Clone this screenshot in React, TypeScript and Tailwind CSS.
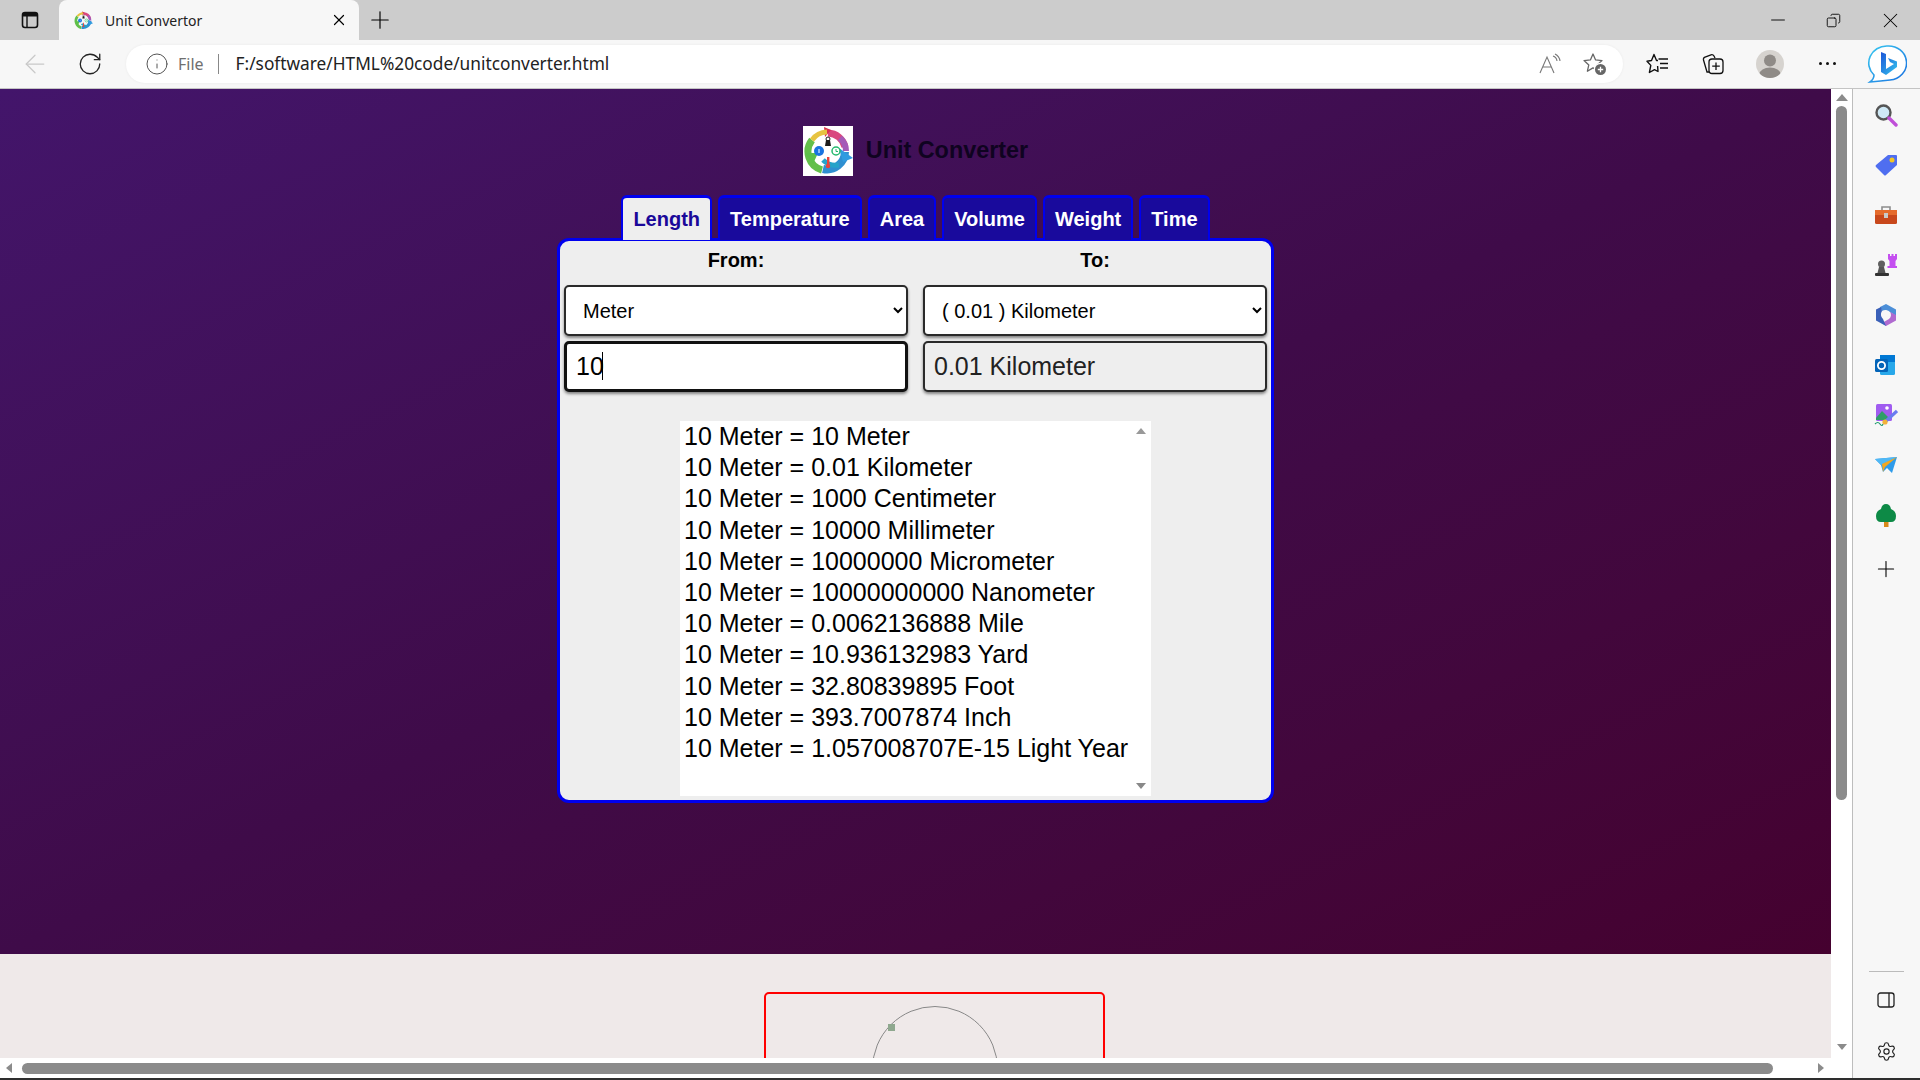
import { ArrowLeft, Copy, Info, Minus, Plus, RotateCw, Settings, X } from 'lucide-react';

const tabs = ['Length', 'Temperature', 'Area', 'Volume', 'Weight', 'Time'];

const results = [
  '10 Meter = 10 Meter',
  '10 Meter = 0.01 Kilometer',
  '10 Meter = 1000 Centimeter',
  '10 Meter = 10000 Millimeter',
  '10 Meter = 10000000 Micrometer',
  '10 Meter = 10000000000 Nanometer',
  '10 Meter = 0.0062136888 Mile',
  '10 Meter = 10.936132983 Yard',
  '10 Meter = 32.80839895 Foot',
  '10 Meter = 393.7007874 Inch',
  '10 Meter = 1.057008707E-15 Light Year',
];

const ConverterLogo = ({ size }: { size: number }) => (
  <svg width={size} height={size} viewBox="0 0 50 50" fill="none">
    <path d="M25 7 A18 18 0 0 1 42 21" stroke="#d9487f" strokeWidth="7" />
    <path d="M37 12 A18 18 0 0 1 43 25" stroke="#a45ab8" strokeWidth="6" />
    <path d="M21 1 L28 4 L22 11 Z" fill="#d9304f" />
    <path d="M42 26 A18 18 0 0 1 20 43" stroke="#2f8fd0" strokeWidth="8" />
    <path d="M36 22 L50 32 L40 36 Z" fill="#2f9be0" />
    <path d="M19 44 A19 19 0 0 1 9 14" stroke="#63bf4a" strokeWidth="7" />
    <path d="M9 14 A19 19 0 0 1 24 6" stroke="#e7c341" strokeWidth="5" />
    <path d="M2 27 L15 27 L10 38 Z" fill="#5cc04a" />
    <path d="M20 34 A18 18 0 0 0 36 39" stroke="#25a3c9" strokeWidth="5" />
    <circle cx="16" cy="25" r="5" fill="#1873e0" />
    <rect x="15.5" y="23" width="1" height="4" fill="#fff" />
    <circle cx="33" cy="25" r="4" fill="#fff" stroke="#25b96e" strokeWidth="1.5" />
    <path d="M33 23 V25.5 H35" stroke="#25b96e" />
    <path d="M22 20 L23 14 H27 L28 20 Z" fill="#1b1b1b" />
    <circle cx="25" cy="13" r="2" stroke="#1b1b1b" />
    <rect x="24" y="31" width="2.4" height="9" fill="#e8433c" />
    <circle cx="25" cy="40" r="2.2" fill="#e8433c" />
  </svg>
);

const SidebarIcon = ({ children }: { children: React.ReactNode }) => (
  <div className="flex h-[50px] items-center justify-center">{children}</div>
);

const BrowserTabStrip = () => (
  <div className="flex h-10 shrink-0 items-center bg-[#cccccc] text-black">
    <div className="flex w-[59px] justify-center">
      <svg width="20" height="20" viewBox="0 0 20 20" fill="none">
        <rect x="2.5" y="2.5" width="15" height="15" rx="2.5" stroke="#111" strokeWidth="1.6" />
        <path d="M3 3 H17 V6.5 H3 Z" fill="#111" />
        <path d="M7 6 V17" stroke="#111" strokeWidth="1.4" />
      </svg>
    </div>
    <div className="flex h-10 w-[300px] items-center rounded-t-[8px] bg-[#f7f7f7] pl-[15px] pr-[11px]">
      <ConverterLogo size={19} />
      <span className="ml-[12px] flex-1 font-['Noto_Sans',sans-serif] text-[14px] text-[#222]">Unit Convertor</span>
      <X size={18} strokeWidth={1.6} />
    </div>
    <div className="ml-[7px]">
      <Plus size={28} strokeWidth={1} />
    </div>
    <div className="ml-auto flex items-center">
      <Minus size={22} strokeWidth={1} className="mr-[37px]" />
      <Copy size={15} strokeWidth={1.4} className="mr-[37px] -scale-x-100" />
      <X size={25} strokeWidth={1} className="mr-[17px]" />
    </div>
  </div>
);

const BrowserToolbar = () => (
  <div className="flex h-[49px] shrink-0 items-center border-b border-[#c4c4c4] bg-[#f7f7f7] pb-[1px]">
    <div className="ml-[15px] flex w-10 justify-center text-[#c9c9c9]">
      <ArrowLeft size={30} strokeWidth={1} />
    </div>
    <div className="ml-[15px] flex w-10 justify-center text-[#222]">
      <RotateCw size={26} strokeWidth={1.2} />
    </div>
    <div className="ml-[16px] flex h-[38px] w-[1497px] items-center rounded-full bg-white pl-[19px] pr-[16px] font-['Noto_Sans',sans-serif] shadow-[0_0_3px_rgba(0,0,0,0.06)]">
      <Info size={24} strokeWidth={1} className="text-[#555]" />
      <span className="ml-[9px] text-[16px] text-[#6f6f6f]">File</span>
      <span className="ml-[14px] h-[20px] w-[1px] bg-[#888]" />
      <span className="ml-[17px] text-[17.3px] text-[#222]">F:/software/HTML%20code/unitconverter.html</span>
      <div className="ml-auto flex items-center gap-[21px] text-[#666]">
        <svg width="24" height="22" viewBox="0 0 24 22" fill="none" stroke="#777" strokeWidth="1.1">
          <path d="M2 20 L9 4 L16 20 M5 14 H13" />
          <path d="M15 3 A6 6 0 0 1 19 8 M17 1 A9 9 0 0 1 22 8" />
        </svg>
        <svg width="24" height="24" viewBox="0 0 24 24" fill="none">
          <path d="M10 2 L12.6 7.9 L19 8.6 L14.2 12.9 L15.6 19.2 L10 15.9 L4.4 19.2 L5.8 12.9 L1 8.6 L7.4 7.9 Z" stroke="#666" strokeWidth="1.3" strokeLinejoin="round" />
          <circle cx="17.5" cy="17.5" r="6.8" fill="#fff" />
          <circle cx="17.5" cy="17.5" r="5.5" fill="#666" />
          <path d="M17.5 14.8 V20.2 M14.8 17.5 H20.2" stroke="#fff" strokeWidth="1.3" />
        </svg>
      </div>
    </div>
    <div className="ml-[23px] flex w-[24px] justify-center">
      <svg width="24" height="22" viewBox="0 0 24 22" fill="none" stroke="#111" strokeWidth="1.4" strokeLinejoin="round">
        <path d="M12 7.5 L10.5 7.5 L8 1.5 L5.5 7.5 L1 8.2 L4.8 12.4 L3.4 19.5 L8.5 16.6 L12 18.5 L11.6 13" />
        <path d="M12.5 6 H22 M14 10.5 H22 M14 15 H22" />
      </svg>
    </div>
    <div className="ml-[31px] flex w-[24px] justify-center">
      <svg width="22" height="22" viewBox="0 0 22 22" fill="none" stroke="#111" strokeWidth="1.3">
        <path d="M7 19 H5 L1.5 7 Q1 5 3 4.2 L9 1.8 Q11 1.2 12 3 L13 5" />
        <rect x="7" y="6" width="14" height="14.5" rx="3" />
        <path d="M14 9.5 V17 M10.2 13.2 H17.8" />
      </svg>
    </div>
    <div className="ml-[31px] flex h-[28px] w-[28px] items-center justify-center overflow-hidden rounded-full bg-[#d6d3cf]">
      <svg width="28" height="28" viewBox="0 0 28 28" fill="#8f8b87">
        <circle cx="14" cy="10.5" r="6" />
        <ellipse cx="14" cy="24" rx="10.5" ry="6.5" />
      </svg>
    </div>
    <div className="ml-[35px] flex gap-[4px]">
      <span className="h-[3px] w-[3px] rounded-full bg-[#111]" />
      <span className="h-[3px] w-[3px] rounded-full bg-[#111]" />
      <span className="h-[3px] w-[3px] rounded-full bg-[#111]" />
    </div>
    <div className="ml-[31px] flex">
      <svg width="40" height="40" viewBox="0 0 40 40" fill="none">
        <defs>
          <linearGradient id="bingRing" x1="0" y1="0" x2="1" y2="1">
            <stop offset="0" stopColor="#38c8f0" />
            <stop offset="1" stopColor="#1a6fe0" />
          </linearGradient>
          <linearGradient id="bingB" x1="0" y1="0" x2="1" y2="1">
            <stop offset="0" stopColor="#1b55d8" />
            <stop offset="1" stopColor="#35c6ee" />
          </linearGradient>
        </defs>
        <path d="M20 2 A18 17 0 0 1 23 36 Q14 37 3 38 Q7 35 7 31 A18 17 0 0 1 20 2 Z" fill="#fff" stroke="url(#bingRing)" strokeWidth="1.6" />
        <path d="M14 8 L19 10 V25 L27 20 L23 18 L21 14 L30 17.5 V23 L19 31 L14 28 Z" fill="url(#bingB)" />
      </svg>
    </div>
  </div>
);

const ConverterPanel = () => (
  <div className="relative h-[565px] w-[717px] rounded-[12px] border-[3px] border-[#0000ee] bg-[#eeeeee] px-[4px]">
    <div className="grid grid-cols-2 gap-x-[15px]">
      <label className="pt-[6px] text-center text-[20px] leading-[26px] font-bold">From:</label>
      <label className="pt-[6px] text-center text-[20px] leading-[26px] font-bold">To:</label>
      <select className="mt-[12px] h-[51px] w-full rounded-[5px] border-2 border-[#2a2a2a] bg-white pl-[13px] text-[20px] shadow-[0_2px_3px_rgba(0,0,0,0.45)]" defaultValue="Meter">
        <option>Meter</option>
      </select>
      <select className="mt-[12px] h-[51px] w-full rounded-[5px] border-2 border-[#2a2a2a] bg-white pl-[13px] text-[20px] shadow-[0_2px_3px_rgba(0,0,0,0.45)]" defaultValue="( 0.01 ) Kilometer">
        <option>( 0.01 ) Kilometer</option>
      </select>
      <div className="relative mt-[5px]">
        <input
          readOnly
          value="10"
          className="h-[51px] w-full rounded-[5px] border-[3px] border-[#111] bg-white pl-[9px] text-[25px] shadow-[0_2px_3px_rgba(0,0,0,0.45)] outline-none"
        />
        <span className="absolute left-[38px] top-[11px] h-[28px] w-[1px] bg-black" />
      </div>
      <div className="mt-[5px] flex h-[51px] items-center rounded-[5px] border-2 border-[#2a2a2a] bg-[#eeeeee] pl-[9px] text-[25px] text-[#222] shadow-[0_2px_3px_rgba(0,0,0,0.45)]">
        0.01 Kilometer
      </div>
    </div>
    <div className="relative mx-auto mt-[29px] h-[375px] w-[471px] overflow-hidden bg-white pl-[4px] text-[25px] leading-[31.2px] text-black">
      {results.map((line) => (
        <div key={line}>{line}</div>
      ))}
      <span className="absolute right-[5px] top-[7px] h-0 w-0 border-x-[5px] border-b-[6px] border-x-transparent border-b-[#999]" />
      <span className="absolute bottom-[7px] right-[5px] h-0 w-0 border-x-[5px] border-t-[6px] border-x-transparent border-t-[#888]" />
    </div>
  </div>
);

const App = () => (
  <div className="flex h-screen w-screen flex-col overflow-hidden bg-[#2e2e2e] font-['Liberation_Sans',Arial,sans-serif]">
    <BrowserTabStrip />
    <BrowserToolbar />
    <div className="flex h-[989px] shrink-0">
      <div className="flex w-[1852px] flex-col bg-white">
        <div className="flex h-[969px]">
          <main className="flex w-[1831px] flex-col">
            <section className="flex h-[865px] flex-col items-center bg-linear-to-br from-[#43156b] via-[#3f0b49] to-[#45012f] pt-[37px]">
              <div className="flex h-[50px] items-center gap-[13px]">
                <div className="bg-white">
                  <ConverterLogo size={50} />
                </div>
                <h1 className="text-[23.4px] font-bold text-[#0f0320]">Unit Converter</h1>
              </div>
              <div className="relative z-10 mt-[19px] -mb-[2px] flex h-[45px] gap-[6px]">
                {tabs.map((tab, i) => (
                  <div
                    key={tab}
                    className={
                      i === 0
                        ? 'flex h-[45px] items-center rounded-t-[6px] border-x-[2px] border-t-[3px] border-[#0000ee] bg-[#eeeeee] px-[10px] text-[20px] font-bold text-[#1a0899]'
                        : 'flex h-[45px] items-center rounded-t-[6px] border-x-[2px] border-t-[3px] border-[#0000ee] bg-[#190a9c] px-[10px] text-[20px] font-bold text-white'
                    }
                  >
                    {tab}
                  </div>
                ))}
              </div>
              <ConverterPanel />
            </section>
            <section className="flex h-[104px] justify-center overflow-hidden bg-[#efe9e9] pl-[38px] pt-[38px]">
              <div className="flex h-[200px] w-[341px] justify-center rounded-[5px] border-2 border-[#ff0000] pt-[12px]">
                <div className="relative h-[126px] w-[126px] rounded-full border border-[#888]">
                  <span className="absolute left-[15px] top-[17px] h-[7px] w-[7px] bg-[#8fa88f]" />
                </div>
              </div>
            </section>
          </main>
          <div className="flex w-[21px] flex-col items-center pt-[5px]">
            <span className="h-0 w-0 border-x-[6px] border-b-[7px] border-x-transparent border-b-[#8b8b8b]" />
            <span className="mt-[5px] h-[694px] w-[11px] rounded-full bg-[#8b8b8b]" />
            <span className="mt-auto mb-[8px] h-0 w-0 border-x-[5px] border-t-[6px] border-x-transparent border-t-[#8b8b8b]" />
          </div>
        </div>
        <div className="flex h-[20px] items-center">
          <span className="ml-[6px] h-0 w-0 border-y-[5px] border-r-[6px] border-y-transparent border-r-[#8b8b8b]" />
          <span className="ml-[10px] h-[11px] w-[1751px] rounded-full bg-[#8b8b8b]" />
          <span className="ml-[45px] h-0 w-0 border-y-[5px] border-l-[6px] border-y-transparent border-l-[#8b8b8b]" />
        </div>
      </div>
      <aside className="flex w-[68px] flex-col border-l border-[#bdbdbd] bg-[#f7f7f7] pr-[1px] pt-[1px]">
        <SidebarIcon>
          <svg width="24" height="24" viewBox="0 0 24 24" fill="none">
            <circle cx="9.5" cy="9.5" r="7" fill="#cfe9f6" stroke="#555" strokeWidth="2.4" />
            <path d="M15 15 L22 22" stroke="#c04fd8" strokeWidth="3.4" strokeLinecap="round" />
          </svg>
        </SidebarIcon>
        <SidebarIcon>
          <svg width="24" height="22" viewBox="0 0 24 22">
            <path d="M14 1 H22 Q23 1 23 2 V11 L12 21 Q11 22 10 21 L2 13 Q1 12 2 11 Z" fill="#4f6ef0" />
            <circle cx="18" cy="6" r="2.5" fill="#f3c623" />
          </svg>
        </SidebarIcon>
        <SidebarIcon>
          <svg width="24" height="20" viewBox="0 0 24 20" fill="none">
            <path d="M8 5 V2 H16 V5" stroke="#8d8d8d" strokeWidth="1.6" />
            <rect x="1" y="5" width="22" height="14" rx="1.5" fill="#c8481c" />
            <rect x="1" y="5" width="22" height="5" fill="#e56b2c" />
            <rect x="10" y="8" width="4" height="5" fill="#c9c9c9" />
          </svg>
        </SidebarIcon>
        <SidebarIcon>
          <svg width="24" height="24" viewBox="0 0 24 24">
            <circle cx="7.5" cy="11" r="3.5" fill="#606060" />
            <path d="M5 14 H10 L11.5 20 H3.5 Z" fill="#555" />
            <rect x="1" y="20" width="14" height="3" rx="1" fill="#333" />
            <path d="M14 1 H16 V3 H17.5 V1 H19.5 V3 H21 V1 H23 V6 L21.5 8 V13 H23 V15 H13.5 V13 H15.5 V8 L14 6 Z" fill="#c44ff0" />
          </svg>
        </SidebarIcon>
        <SidebarIcon>
          <svg width="22" height="24" viewBox="0 0 22 24" fill="none">
            <path d="M11 1 L21 6.5 V13 L15 9 A6 6 0 0 0 7 8 L5 4 Z" fill="#4c8fd8" />
            <path d="M21 12 V17.5 L11 23 L7 20 L14 16 A5 5 0 0 0 15 9 Z" fill="#b06ad0" />
            <path d="M1 6.5 L6 4 L7 8 A6 6 0 0 0 8 16 L11 23 L1 17.5 Z" fill="#3a60b8" />
            <circle cx="11" cy="12" r="4" fill="#f7f7f7" />
          </svg>
        </SidebarIcon>
        <SidebarIcon>
          <svg width="22" height="22" viewBox="0 0 22 22">
            <rect x="5" y="1" width="15" height="20" rx="1.5" fill="#28a8ea" />
            <rect x="5" y="1" width="15" height="7" fill="#0078d4" />
            <rect x="0" y="5" width="13" height="13" rx="1.5" fill="#0364b8" />
            <circle cx="6.5" cy="11.5" r="3.6" fill="none" stroke="#fff" strokeWidth="1.8" />
          </svg>
        </SidebarIcon>
        <SidebarIcon>
          <svg width="24" height="24" viewBox="0 0 24 24" fill="none">
            <rect x="2" y="1" width="16" height="17" rx="1.5" fill="#a05cf0" />
            <path d="M2 15 L8 8 L14 14 V17 H2 Z" fill="#2f9d6a" />
            <circle cx="13" cy="5" r="1.8" fill="#fff" />
            <path d="M23 8 L12 18" stroke="#6a7cf0" strokeWidth="3.2" />
            <circle cx="11" cy="19" r="2.6" fill="#f3b23a" />
            <path d="M1 21 Q4 18 6 21 T9 21" stroke="#1e9b6b" strokeWidth="1.2" />
          </svg>
        </SidebarIcon>
        <SidebarIcon>
          <svg width="24" height="18" viewBox="0 0 24 18">
            <path d="M1 3 L23 1 L18 17 L13 12 L9 16 L7 9 Z" fill="#2e9bea" />
            <path d="M1 3 L23 1 L7 9 Z" fill="#50b8f5" />
            <path d="M23 1 L8 8 L9 16 L11 11 Z" fill="#f3a71f" />
          </svg>
        </SidebarIcon>
        <SidebarIcon>
          <svg width="22" height="24" viewBox="0 0 22 24">
            <rect x="9" y="18" width="4.5" height="6" fill="#d88a1a" />
            <path d="M11 1 Q15 1 16 6 Q21 8 21 13 Q21 19 16 19 H6 Q1 19 1 13 Q1 8 6 6 Q7 1 11 1 Z" fill="#0d8a46" />
          </svg>
        </SidebarIcon>
        <div className="mt-[4px] flex h-[50px] items-center justify-center">
          <Plus size={26} strokeWidth={1} className="text-black" />
        </div>
        <div className="mt-auto flex flex-col items-center pb-[12px]">
          <span className="h-[1px] w-[35px] bg-[#bbbbbb]" />
          <div className="mt-[13px] flex h-[30px] items-center">
            <svg width="18" height="16" viewBox="0 0 18 16" fill="none" stroke="#222" strokeWidth="1.3">
              <rect x="1" y="1" width="16" height="14" rx="2.5" />
              <path d="M12 1 V15" />
            </svg>
          </div>
          <div className="mt-[21px] flex h-[30px] items-center">
            <Settings size={21} strokeWidth={1.3} className="text-[#222]" />
          </div>
        </div>
      </aside>
    </div>
  </div>
);

export default App;
